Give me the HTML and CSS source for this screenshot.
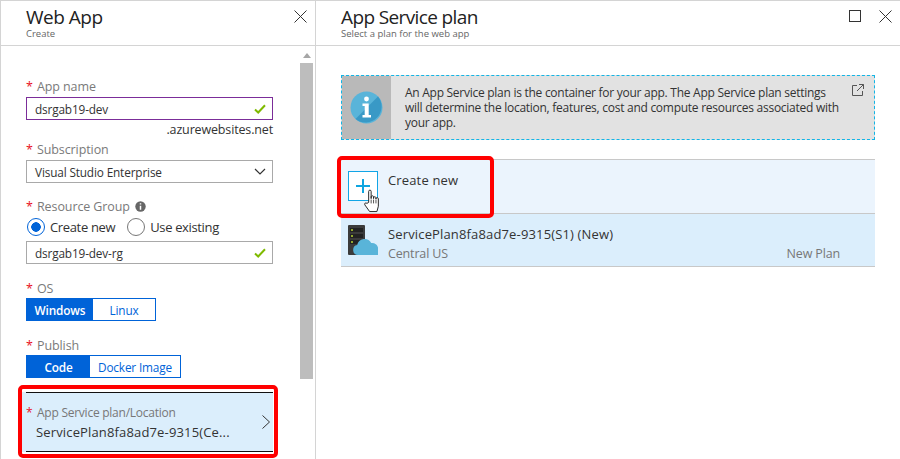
FILE: index.html
```html
<!DOCTYPE html>
<html lang="en">
<head>
    <meta charset="UTF-8">
    <title>App Service plan</title>
    <link rel="stylesheet" href="styles.css">
</head>
<body>
    <div class="blades">
        <section class="blade blade-left">
            <header class="blade-head">
                <div>
                    <div class="blade-title">Web App</div>
                    <div class="blade-sub">Create</div>
                </div>
                <div class="blade-actions">
                    <svg class="ico" width="13" height="13" viewBox="0 0 13 13"><path d="M.5.5l12 12M12.500.5l-12 12" fill="none" stroke="#333" stroke-width="1"/></svg>
                </div>
            </header>
            <div class="blade-body">
                <div class="form">
                    <div class="field">
                        <label class="lbl"><span class="star">*</span>App name</label>
                        <div class="input input-active">
                            <span>dsrgab19-dev</span>
                            <svg width="12" height="10" viewBox="0 0 12 10"><path d="M1 5.500l3.200 3L11 1.200" fill="none" stroke="#7fba00" stroke-width="2"/></svg>
                        </div>
                        <div class="suffix">.azurewebsites.net</div>
                    </div>
                    <div class="field field-sub">
                        <label class="lbl"><span class="star">*</span>Subscription</label>
                        <div class="input">
                            <span>Visual Studio Enterprise</span>
                            <svg width="12" height="7" viewBox="0 0 12 7"><path d="M1 1l5 5 5-5" fill="none" stroke="#333" stroke-width="1.200"/></svg>
                        </div>
                    </div>
                    <div class="field field-rg">
                        <label class="lbl"><span class="star">*</span>Resource Group
                            <svg class="hint" width="11" height="11" viewBox="0 0 11 11"><circle cx="5.500" cy="5.500" r="5.200" fill="#666"/><path d="M5.500 2.200v1.400M5.500 4.800v4" stroke="#fff" stroke-width="1.500"/></svg>
                        </label>
                        <div class="radios">
                            <span class="radio radio-on"></span><span class="radio-text">Create new</span>
                            <span class="radio"></span><span class="radio-text">Use existing</span>
                        </div>
                        <div class="input">
                            <span>dsrgab19-dev-rg</span>
                            <svg width="12" height="10" viewBox="0 0 12 10"><path d="M1 5.500l3.200 3L11 1.200" fill="none" stroke="#7fba00" stroke-width="2"/></svg>
                        </div>
                    </div>
                    <div class="field field-os">
                        <label class="lbl"><span class="star">*</span>OS</label>
                        <div class="toggle toggle-os">
                            <span class="opt opt-on opt-win">Windows</span>
                            <span class="opt">Linux</span>
                        </div>
                    </div>
                    <div class="field field-pub">
                        <label class="lbl"><span class="star">*</span>Publish</label>
                        <div class="toggle toggle-pub">
                            <span class="opt opt-on opt-code">Code</span>
                            <span class="opt">Docker Image</span>
                        </div>
                    </div>
                    <div class="plan-row">
                        <div class="plan-inner">
                            <div class="plan-text">
                                <div class="plan-lbl"><span class="star">*</span>App Service plan/Location</div>
                                <div class="plan-val">ServicePlan8fa8ad7e-9315(Ce...</div>
                            </div>
                            <svg width="8" height="14" viewBox="0 0 8 14"><path d="M.5.500L7.500 7 .5 13.500" fill="none" stroke="#333" stroke-width="1"/></svg>
                        </div>
                        <div class="redbox redbox-plan"></div>
                    </div>
                </div>
                <div class="scroll">
                    <div class="scroll-arrow"></div>
                    <div class="scroll-thumb"></div>
                </div>
            </div>
        </section>

        <section class="blade blade-right">
            <header class="blade-head">
                <div>
                    <div class="blade-title blade-title-long">App Service plan</div>
                    <div class="blade-sub">Select a plan for the web app</div>
                </div>
                <div class="blade-actions">
                    <svg class="ico" width="12" height="12" viewBox="0 0 12 12"><rect x="0.500" y="0.500" width="11" height="11" fill="none" stroke="#333"/></svg>
                    <svg class="ico" width="13" height="13" viewBox="0 0 13 13"><path d="M.5.5l12 12M12.500.5l-12 12" fill="none" stroke="#333" stroke-width="1"/></svg>
                </div>
            </header>
            <div class="plan-body">
                <div class="info">
                    <div class="info-icon">
                        <svg width="33" height="33" viewBox="0 0 33 33">
                            <circle cx="16.500" cy="16.500" r="16" fill="#59b4d9"/>
                            <path d="M28 5.500A16 16 0 0 1 5.500 28z" fill="#3999c6"/>
                            <circle cx="16.500" cy="8" r="2.400" fill="#fff"/>
                            <path d="M12.500 12.500h6.200v11.500h2.300v2.500H12.500V24h2.200v-9h-2.200z" fill="#fff"/>
                        </svg>
                    </div>
                    <p class="info-text">An App Service plan is the container for your app. The App Service plan settings will determine the location, features, cost and compute resources associated with your app.</p>
                    <svg class="info-link" width="12" height="12" viewBox="0 0 12 12"><path d="M5 1.500H.5v10h10V7M7 .5h4.500V5M11.500.5L5 7" fill="none" stroke="#555"/></svg>
                </div>
                <div class="create-row">
                    <span class="plus-box">
                        <svg width="14" height="14" viewBox="0 0 14 14"><path d="M7 0v14M0 7h14" stroke="#0ea5e0" stroke-width="2"/></svg>
                        <svg class="hand" width="19" height="24" viewBox="0 0 18 25"><path d="M5 14V2.500a1.300 1.300 0 0 1 2.600 0V10l0-2a1.300 1.300 0 0 1 2.500 0v2-1a1.300 1.300 0 0 1 2.500 0v1.500-.5a1.300 1.300 0 0 1 2.500 0V18l-1.500 5.500H6L1 16.500c-.8-1.500 1-2.800 2.200-1.500z" fill="#fff" stroke="#222"/><path d="M7.600 11v4M10.100 11v4M12.600 11v4" stroke="#222" stroke-width=".8"/></svg>
                    </span>
                    <span class="create-text">Create new</span>
                    <div class="redbox redbox-create"></div>
                </div>
                <div class="sel-row">
                    <svg class="srv" width="30" height="31" viewBox="0 0 30 31">
                        <rect x="0" y="0" width="17" height="30" rx="1" fill="#3b3b3b"/>
                        <rect x="2" y="3" width="13" height="4" fill="#222"/>
                        <rect x="2" y="9" width="13" height="4" fill="#222"/>
                        <rect x="2" y="15" width="13" height="4" fill="#222"/>
                        <circle cx="4" cy="5" r="1" fill="#b8d432"/>
                        <circle cx="4" cy="11" r="1" fill="#b8d432"/>
                        <circle cx="4" cy="17" r="1" fill="#b8d432"/>
                        <path d="M10 30a5 5 0 0 1-.8-9.900 7.500 7.500 0 0 1 14-2.100 6 6 0 0 1 6.800 7.200V30z" fill="#59b4d9"/>
                    </svg>
                    <div class="sel-text">
                        <div class="sel-name">ServicePlan8fa8ad7e-9315(S1) (New)</div>
                        <div class="sel-loc"><span>Central US</span><span>New Plan</span></div>
                    </div>
                </div>
            </div>
        </section>
    </div>
</body>
</html>
```

FILE: styles.css
```css
html, body { margin: 0; padding: 0; }
body { width: 900px; height: 459px; overflow: hidden; background: #fff; font-family: "Open Sans", sans-serif; font-size: 12px; color: #333; }

.blades { display: flex; height: 459px; border-top: 1px solid #d4d4d4; box-sizing: border-box; }
.blade { display: flex; flex-direction: column; box-sizing: border-box; }
.blade-left { width: 316px; border-left: 1px solid #d4d4d4; border-right: 1px solid #d4d4d4; }
.blade-right { width: 584px; }

.blade-head { height: 45px; box-sizing: border-box; border-bottom: 1px solid #d4d4d4; padding: 5px 0 0 25px; display: flex; justify-content: space-between; flex: none; }
.blade-title { font-size: 19px; line-height: 22px; color: #222; letter-spacing: -0.5px; }
.blade-title-long { letter-spacing: -0.62px; }
.blade-sub { font-size: 9.500px; line-height: 12px; color: #666; }
.blade-actions { display: flex; gap: 18px; align-items: center; height: 22px; margin-top: -1px; padding-right: 8px; }

.blade-body { flex: 1; display: flex; min-height: 0; }
.form { width: 272px; box-sizing: border-box; padding: 33px 0 0 25px; margin-right: 25px; flex: none; }
.scroll { width: 13px; margin-left: 2px; flex: none; }
.scroll-arrow { width: 0; height: 0; margin: 7px auto 5px; border-left: 4px solid transparent; border-right: 4px solid transparent; border-bottom: 5px solid #a6a6a6; }
.scroll-thumb { height: 316px; background: #bdbdbd; }

.lbl { display: block; line-height: 16px; color: #7a7a7a; font-size: 12.500px; letter-spacing: -0.1px; }
.star { color: #e81123; display: inline-block; width: 11px; }
.hint { vertical-align: -1px; margin-left: 2px; }

.input { height: 23px; box-sizing: border-box; border: 1px solid #a9a9a9; margin-top: 2px; padding: 0 6px 0 8px; display: flex; justify-content: space-between; align-items: center; background: #fff; color: #333; font-size: 11.800px; letter-spacing: -0.15px; }
.input-active { border-color: #7b2d99; }
.suffix { text-align: right; line-height: 19px; font-size: 12.500px; letter-spacing: -0.15px; }

.field-sub { margin-top: 3px; }
.field-rg { margin-top: 16px; }
.field-os { margin-top: 17px; }
.field-pub { margin-top: 17px; }

.radios { display: flex; align-items: center; height: 20px; margin-top: 2px; font-size: 13px; }
.radio { width: 18px; height: 18px; margin-left: 1px; border: 1px solid #777; border-radius: 50%; box-sizing: border-box; flex: none; }
.radio-on { border-color: #0063d8; background: radial-gradient(circle, #0063d8 0 4.500px, #fff 5px); }
.radio-text { margin: 0 11px 0 5px; letter-spacing: -0.35px; }
.radios + .input { margin-top: 4px; }

.toggle { display: flex; height: 23px; margin-top: 1px; box-sizing: border-box; border: 1px solid #0063d8; font-size: 11.800px; color: #0063d8; letter-spacing: -0.15px; }
.toggle-os { width: 130px; }
.toggle-pub { width: 155px; }
.opt { flex: 1; display: flex; align-items: center; justify-content: center; }
.opt-on { background: #0063d8; color: #fff; font-weight: 600; flex: none; }
.opt-win { width: 66px; }
.opt-code { width: 63px; }

.plan-row { position: relative; margin: 14px 0 0 -4px; background: #dbeefc; padding: 0 0 0 4px; }
.plan-inner { height: 60px; box-sizing: border-box; border-top: 1px solid #111; border-bottom: 1px solid #111; display: flex; align-items: center; justify-content: space-between; padding-right: 3px; }
.plan-text { margin-top: 4px; }
.plan-lbl { color: #777; font-size: 12px; line-height: 16px; letter-spacing: -0.25px; }
.plan-val { font-size: 13px; line-height: 22px; padding-left: 10px; letter-spacing: 0.15px; color: #333; }

.redbox { position: absolute; border: 4px solid #f00; border-radius: 5px; box-sizing: border-box; pointer-events: none; }
.redbox-plan { left: -4px; right: -5px; top: -7px; bottom: -6px; }
.redbox-create { left: -4px; top: -4px; width: 157px; height: 62px; }

.plan-body { padding: 29px 25px 0; flex: 1; }
.info { display: flex; height: 65px; box-sizing: border-box; border: 1px dashed #12b5e6; background: #e2e2e2; }
.info-icon { width: 49px; background: #b9b9b9; display: flex; align-items: center; justify-content: center; flex: none; }
.info-text { margin: 0; padding: 9px 0 0 14px; width: 438px; flex: none; font-size: 12px; line-height: 15px; letter-spacing: -0.27px; }
.info-link { margin: 8px 10px 0 auto; }

.create-row { position: relative; height: 54px; margin-top: 19px; box-sizing: border-box; border-top: 1px solid #c8c8c8; background: #ebf4fd; display: flex; align-items: flex-start; padding: 11px 0 0 7px; }
.plus-box { position: relative; width: 30px; height: 30px; box-sizing: border-box; border: 1px solid #12a5e6; display: flex; align-items: center; justify-content: center; background: #fff; }
.hand { position: absolute; left: 14px; top: 17px; }
.create-text { margin-left: 10px; line-height: 18px; font-size: 13px; letter-spacing: 0.15px; }

.sel-row { height: 54px; box-sizing: border-box; border-top: 1px solid #c8c8c8; border-bottom: 1px solid #c8c8c8; background: #dbeefc; display: flex; align-items: center; padding: 0 35px 0 7px; }
.srv { flex: none; }
.sel-text { flex: 1; margin-left: 10px; margin-top: 7px; }
.sel-name { font-size: 13px; line-height: 19px; letter-spacing: 0.15px; }
.sel-loc { display: flex; justify-content: space-between; color: #777; line-height: 19px; font-size: 12.500px; letter-spacing: -0.15px; }
```
